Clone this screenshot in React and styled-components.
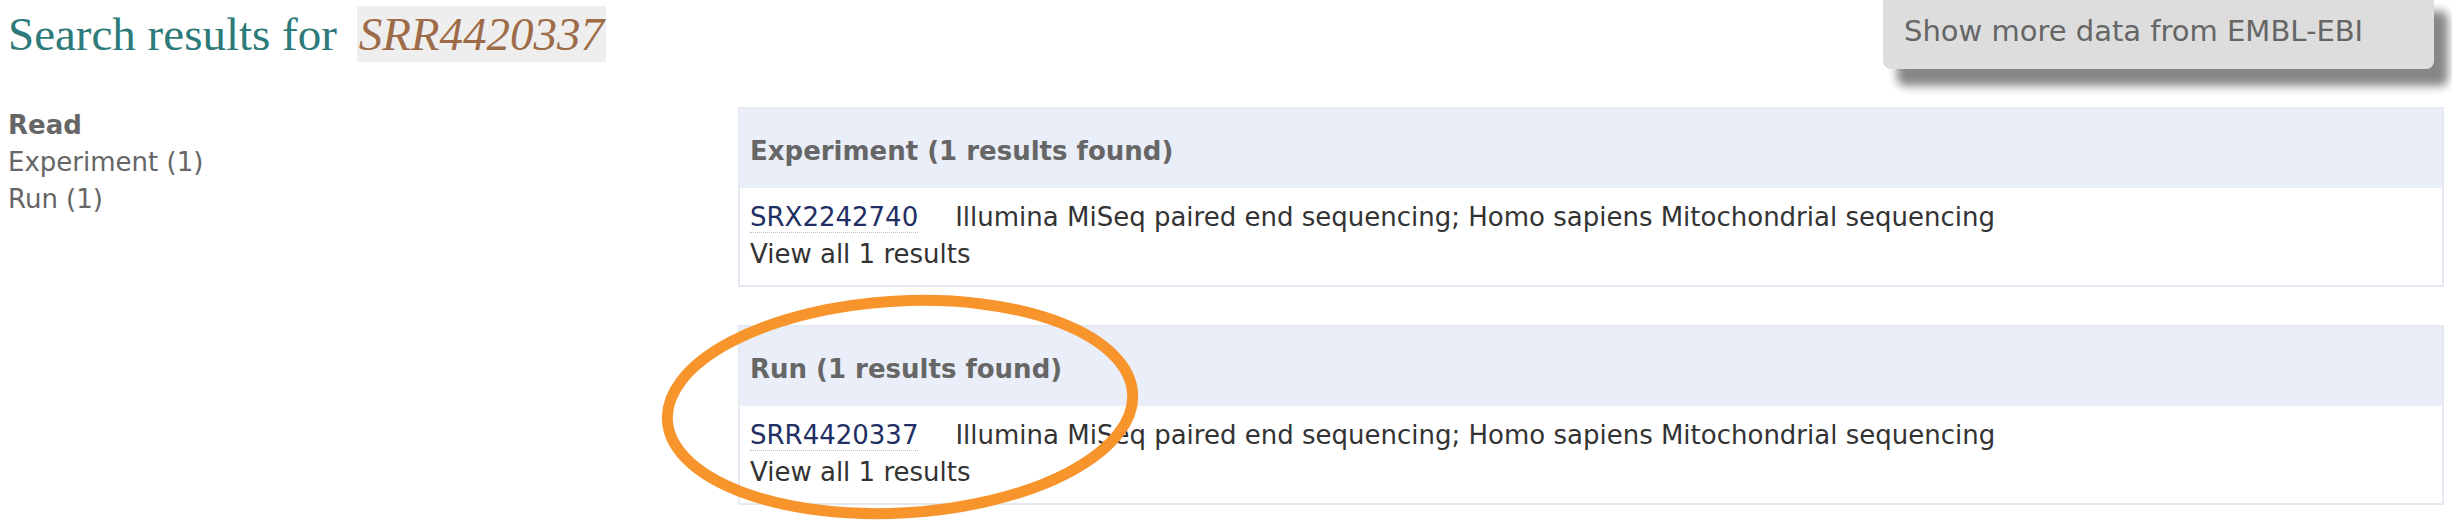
import styled, { createGlobalStyle } from "styled-components";

const GlobalStyle = createGlobalStyle`
  html, body {
    margin: 0;
    padding: 0;
    background: #ffffff;
    overflow: hidden;
  }
  body {
    font-family: "DejaVu Sans", Verdana, sans-serif;
  }
`;

const results = [
  {
    type: "Experiment",
    id: "SRX2242740",
    description:
      "Illumina MiSeq paired end sequencing; Homo sapiens Mitochondrial sequencing",
  },
  {
    type: "Run",
    id: "SRR4420337",
    description:
      "Illumina MiSeq paired end sequencing; Homo sapiens Mitochondrial sequencing",
  },
];

export default function App() {
  return (
    <>
      <GlobalStyle />
      <St.Page>
        <St.TopBar>
          <St.Title>
            Search results for <St.Query>SRR4420337</St.Query>
          </St.Title>
          <St.MoreButton>Show more data from EMBL-EBI</St.MoreButton>
        </St.TopBar>

        <St.Content>
          <St.Sidebar>
            <St.Group>Read</St.Group>
            {results.map((r) => (
              <St.Facet key={r.type}>
                {r.type} (1)
              </St.Facet>
            ))}
          </St.Sidebar>

          <St.Results>
            {results.map((r) => (
              <St.Panel key={r.type}>
                <St.PanelHeader>{r.type} (1 results found)</St.PanelHeader>
                <St.PanelBody>
                  <St.Row>
                    <St.Accession>{r.id}</St.Accession>
                    <span>{r.description}</span>
                  </St.Row>
                  <St.Row>View all 1 results</St.Row>
                </St.PanelBody>
              </St.Panel>
            ))}
          </St.Results>
        </St.Content>

        {/* hand-drawn highlight over the Run panel */}
        <St.Annotation viewBox="0 0 2452 520">
          <ellipse
            cx="900"
            cy="407"
            rx="233"
            ry="106"
            transform="rotate(-3.3 900 407)"
            fill="none"
            stroke="#f7942b"
            strokeWidth="11"
          />
        </St.Annotation>
      </St.Page>
    </>
  );
}

const St = {
  Page: styled.div`
    position: relative;
    height: 520px;
    padding: 7px 8px 0 8px;
    box-sizing: border-box;
  `,
  TopBar: styled.header`
    display: flex;
    justify-content: space-between;
    align-items: flex-start;
  `,
  Title: styled.h1`
    margin: 0;
    font-family: "Liberation Serif", "Times New Roman", serif;
    font-weight: normal;
    font-size: 47px;
    line-height: 54px;
    color: #2c7a79;
    white-space: nowrap;
  `,
  Query: styled.span`
    margin-left: 8px;
    padding: 2px 2px;
    background-color: #eeeeee;
    color: #9d6b48;
    font-style: italic;
  `,
  MoreButton: styled.div`
    margin-top: -13px;
    margin-right: 10px;
    width: 551px;
    box-sizing: border-box;
    padding: 19px 21px;
    background-color: #dddddd;
    border-radius: 8px;
    box-shadow: 14px 17px 10px #878787;
    font-size: 29px;
    line-height: 37px;
    color: #666666;
    white-space: nowrap;
  `,
  Content: styled.main`
    display: grid;
    grid-template-columns: 730px 1fr;
    margin-top: 38px;
  `,
  Sidebar: styled.nav`
    display: flex;
    flex-direction: column;
    font-size: 26px;
    line-height: 37px;
    color: #666666;
  `,
  Group: styled.div`
    font-weight: bold;
  `,
  Facet: styled.div``,
  Results: styled.section`
    display: flex;
    flex-direction: column;
    gap: 38px;
  `,
  Panel: styled.div`
    border: 2px solid #e6e9f1;
    background-color: #ffffff;
  `,
  PanelHeader: styled.h3`
    margin: 0;
    padding: 24px 10px 18px;
    background-color: #eaeef8;
    font-size: 26px;
    line-height: 37px;
    font-weight: bold;
    color: #666666;
  `,
  PanelBody: styled.div`
    padding: 11px 10px 12px;
    font-size: 26px;
    line-height: 37px;
    color: #333333;
  `,
  Row: styled.div`
    white-space: nowrap;
  `,
  Accession: styled.a`
    margin-right: 37px;
    color: #1f2f63;
    text-decoration: none;
    border-bottom: 1px dotted #b8bcc8;
  `,
  Annotation: styled.svg`
    position: absolute;
    left: 0;
    top: 0;
    width: 2452px;
    height: 520px;
    pointer-events: none;
  `,
};
